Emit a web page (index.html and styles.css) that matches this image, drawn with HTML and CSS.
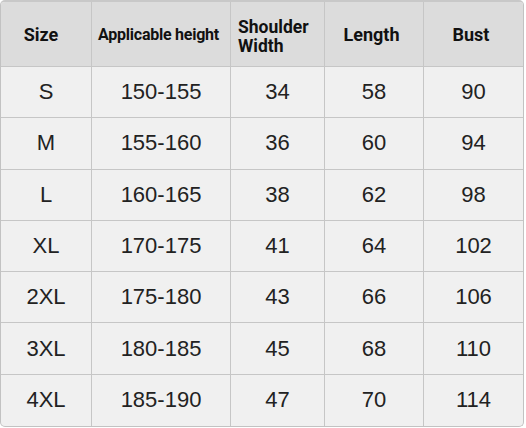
FILE: index.html
```html
<!DOCTYPE html>
<html>
<head>
<meta charset="utf-8">
<link rel="stylesheet" href="styles.css">
</head>
<body>
<div class="chart">
  <div class="cell head first">Size</div>
  <div class="cell head narrow">Applicable height</div>
  <div class="cell head left">Shoulder<br>Width</div>
  <div class="cell head">Length</div>
  <div class="cell head last">Bust</div>

  <div class="cell">S</div><div class="cell">150-155</div><div class="cell">34</div><div class="cell">58</div><div class="cell last">90</div>
  <div class="cell">M</div><div class="cell">155-160</div><div class="cell">36</div><div class="cell">60</div><div class="cell last">94</div>
  <div class="cell">L</div><div class="cell">160-165</div><div class="cell">38</div><div class="cell">62</div><div class="cell last">98</div>
  <div class="cell">XL</div><div class="cell">170-175</div><div class="cell">41</div><div class="cell">64</div><div class="cell last">102</div>
  <div class="cell">2XL</div><div class="cell">175-180</div><div class="cell">43</div><div class="cell">66</div><div class="cell last">106</div>
  <div class="cell">3XL</div><div class="cell">180-185</div><div class="cell">45</div><div class="cell">68</div><div class="cell last">110</div>
  <div class="cell bottom">4XL</div><div class="cell bottom">185-190</div><div class="cell bottom">47</div><div class="cell bottom">70</div><div class="cell bottom last">114</div>
</div>
</body>
</html>
```
FILE: styles.css
```css
html, body {
  margin: 0;
  padding: 0;
  background: #ffffff;
}
.chart {
  width: 524px;
  height: 427px;
  box-sizing: border-box;
  border: 1px solid #c2c2c2;
  border-top: 2px solid #c8c8c8;
  border-radius: 5px;
  overflow: hidden;
  display: grid;
  grid-template-columns: 91px 139px 94px 99px 1fr;
  grid-template-rows: 65px repeat(7, 1fr);
  background: #f0f0f0;
  font-family: "Liberation Sans", Arial, sans-serif;
  font-size: 22px;
  color: #222222;
}
.cell {
  display: flex;
  align-items: center;
  justify-content: center;
  border-right: 1px solid #c6c6c6;
  border-bottom: 1px solid #c6c6c6;
}
.cell.last {
  border-right: none;
}
.cell.bottom {
  border-bottom: none;
}
.head {
  background: #dcdcdc;
  font-family: Roboto, "Liberation Sans", sans-serif;
  font-weight: 700;
  font-size: 18px;
  color: #111111;
  line-height: 19px;
  padding-right: 5px;
}
.head.first {
  padding-right: 10px;
}
.head.narrow {
  font-size: 16px;
  letter-spacing: -0.25px;
}
.head.left {
  justify-content: flex-start;
  font-size: 17.5px;
  padding-left: 7px;
  padding-right: 0;
  padding-top: 6px;
}
```
